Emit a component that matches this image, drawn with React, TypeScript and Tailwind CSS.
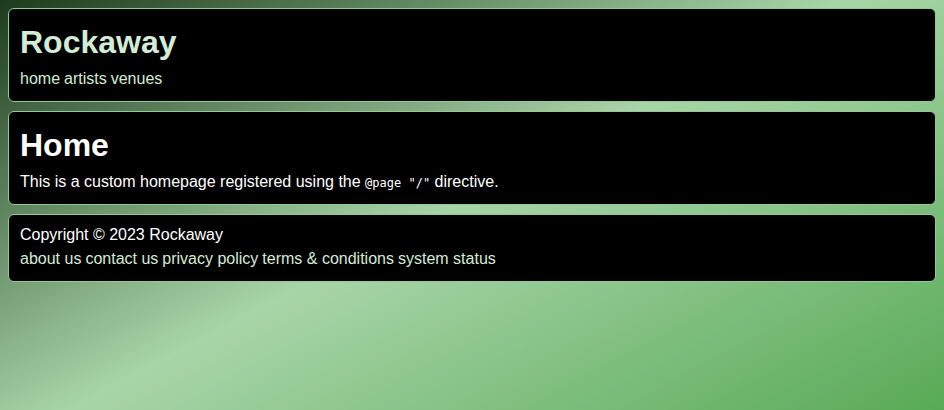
import type { ReactNode } from "react";

const sans = "font-['Liberation_Sans',Arial,sans-serif]";

function Card({ children, className = "" }: { children: ReactNode; className?: string }) {
  return (
    <section className={`rounded-[6px] border border-[#94c994] bg-black px-[11px] ${className}`}>
      {children}
    </section>
  );
}

export default function App() {
  const nav = ["home", "artists", "venues"];
  const footerLinks = ["about us", "contact us", "privacy policy", "terms & conditions", "system status"];

  return (
    <div
      className={`${sans} min-h-[410px] bg-[linear-gradient(152deg,#1d3b1e_0%,#a8d5a8_49%,#58aa56_100%)] p-[8px] text-[16px] text-white`}
    >
      <div className="flex flex-col gap-[9px]">
        <Card className="pt-[15px] pb-[13px]">
          <h1 className="text-[32px] font-bold leading-[36px] text-[#d3ecd6]">Rockaway</h1>
          <nav className="mt-[10px] flex gap-[4px] leading-[18px] text-[#d3ecd6]">
            {nav.map((n) => (
              <a key={n} href="#">
                {n}
              </a>
            ))}
          </nav>
        </Card>

        <Card className="pt-[15px] pb-[12px]">
          <h2 className="text-[32px] font-bold leading-[36px]">Home</h2>
          <p className="mt-[10px] leading-[18px]">
            This is a custom homepage registered using the{" "}
            <code className="font-['DejaVu_Sans_Mono',monospace] text-[12px]">@page "/"</code> directive.
          </p>
        </Card>

        <Card className="pt-[11px] pb-[13px]">
          <p className="leading-[18px]">Copyright © 2023 Rockaway</p>
          <div className="mt-[6px] flex gap-[4px] leading-[18px] text-[#d3ecd6]">
            {footerLinks.map((l) => (
              <a key={l} href="#">
                {l}
              </a>
            ))}
          </div>
        </Card>
      </div>
    </div>
  );
}
